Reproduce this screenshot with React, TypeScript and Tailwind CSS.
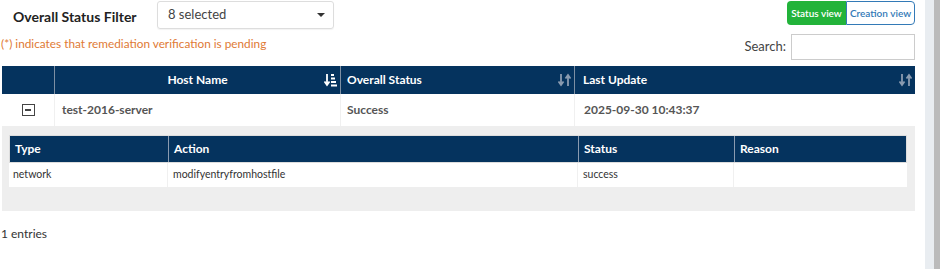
const navy = "bg-[#05335e]";

function SortIcon({ active }: { active?: boolean }) {
  // down arrow + up arrow, or down arrow + bars for the active column
  return (
    <svg width="13" height="14" viewBox="0 0 13 14" className={active ? "text-white" : "text-[#8a9bb0]"}>
      <path d="M3 1v10M0.5 8.5L3 12l2.5-3.5" stroke="currentColor" strokeWidth="1.8" fill="none" />
      {active ? (
        <g fill="currentColor">
          <rect x="7" y="1" width="3" height="2" />
          <rect x="7" y="4.5" width="4" height="2" />
          <rect x="7" y="8" width="5" height="2" />
          <rect x="7" y="11.5" width="6" height="2" />
        </g>
      ) : (
        <path d="M10 13V3M7.5 5.5L10 2l2.5 3.5" stroke="currentColor" strokeWidth="1.8" fill="none" />
      )}
    </svg>
  );
}

export default function App() {
  return (
    <div className="flex h-[269px] w-[940px] overflow-hidden bg-white font-['Lato','Noto_Sans',sans-serif] text-[13px] text-[#333]">
      <div className="w-[925px] pl-[1px] pr-[10px]">
        <div className="flex h-[30px] items-start justify-between">
          <div className="flex items-start">
            <span className="ml-[12px] mt-[6px] w-[144px] text-[14px] font-bold text-[#222]">Overall Status Filter</span>
            <div className="mt-[1px] flex h-[28px] w-[177px] items-center justify-between rounded-[3px] border border-[#ddd] pl-[10px] pr-[8px] text-[13px] text-[#444] shadow-[0_1px_1px_rgba(0,0,0,0.05)]">
              <span>8 selected</span>
              <span className="h-0 w-0 border-x-[4px] border-t-[4px] border-x-transparent border-t-[#333]" />
            </div>
          </div>
          <div className="mt-[1px] flex text-[10px] font-semibold">
            <span className="flex h-[24px] w-[59px] items-center justify-center rounded-l-[4px] bg-[#22b33a] text-white">Status view</span>
            <span className="flex h-[24px] w-[69px] items-center justify-center rounded-r-[4px] border border-[#337ab7] text-[#337ab7]">Creation view</span>
          </div>
        </div>
        <div className="flex h-[36px] items-start justify-between">
          <span className="mt-[5px] text-[11.8px] text-[#e07a35]">(*) indicates that remediation verification is pending</span>
          <div className="mt-[4px] flex items-center">
            <span className="mr-[5px] text-[13px] text-[#444]">Search:</span>
            <div className="h-[26px] w-[124px] border border-[#ccc]" />
          </div>
        </div>

        <div className="ml-[1px]">
          <div className={`flex h-[28px] ${navy} text-[12px] font-bold text-white`}>
            <div className="w-[53px] border-r border-[#7d8fa3]" />
            <div className="flex w-[286px] items-center justify-end border-r border-[#7d8fa3] pr-[3px]">
              <span className="flex-1 pl-[16px] text-center">Host Name</span>
              <SortIcon active />
            </div>
            <div className="flex w-[234px] items-center justify-between border-r border-[#7d8fa3] pl-[6px] pr-[3px]">
              <span>Overall Status</span>
              <SortIcon />
            </div>
            <div className="flex flex-1 items-center justify-between pl-[8px] pr-[3px]">
              <span>Last Update</span>
              <SortIcon />
            </div>
          </div>
          <div className="flex h-[32px] text-[12px] font-bold text-[#555]">
            <div className="flex w-[53px] items-center justify-center border-r border-[#f0f0f0]">
              <span className="flex h-[12px] w-[13px] items-center justify-center border-[1.5px] border-[#444]">
                <span className="h-[2px] w-[6px] bg-[#444]" />
              </span>
            </div>
            <div className="flex w-[286px] items-center border-r border-[#f0f0f0] pl-[7px]">test-2016-server</div>
            <div className="flex w-[234px] items-center border-r border-[#f0f0f0] pl-[6px]">Success</div>
            <div className="flex flex-1 items-center pl-[9px]">2025-09-30 10:43:37</div>
          </div>
          <div className="h-[85px] bg-[#eeeeee] pl-[7px] pr-[8px] pt-[9px]">
            <div className={`flex h-[28px] ${navy} border border-[#ddd] text-[12px] font-bold text-white`}>
              <div className="flex w-[159px] items-center border-r border-[#8a9bb0] pl-[5px]">Type</div>
              <div className="flex w-[410px] items-center border-r border-[#8a9bb0] pl-[5px]">Action</div>
              <div className="flex w-[156px] items-center border-r border-[#8a9bb0] pl-[5px]">Status</div>
              <div className="flex flex-1 items-center pl-[5px]">Reason</div>
            </div>
            <div className="flex h-[24px] bg-white text-[10.5px] text-[#333]">
              <div className="flex w-[159px] items-center border-r border-[#f0f0f0] pl-[4px]">network</div>
              <div className="flex w-[410px] items-center border-r border-[#f0f0f0] pl-[5px]">modifyentryfromhostfile</div>
              <div className="flex w-[156px] items-center border-r border-[#f0f0f0] pl-[5px]">success</div>
              <div className="flex-1" />
            </div>
          </div>
        </div>
        <div className="mt-[14px] text-[12px] text-[#333]">1 entries</div>
      </div>
      <div className="w-[9px] bg-[#e9edf1]" />
      <div className="w-[6px] bg-[#bbbbbb]" />
    </div>
  );
}
